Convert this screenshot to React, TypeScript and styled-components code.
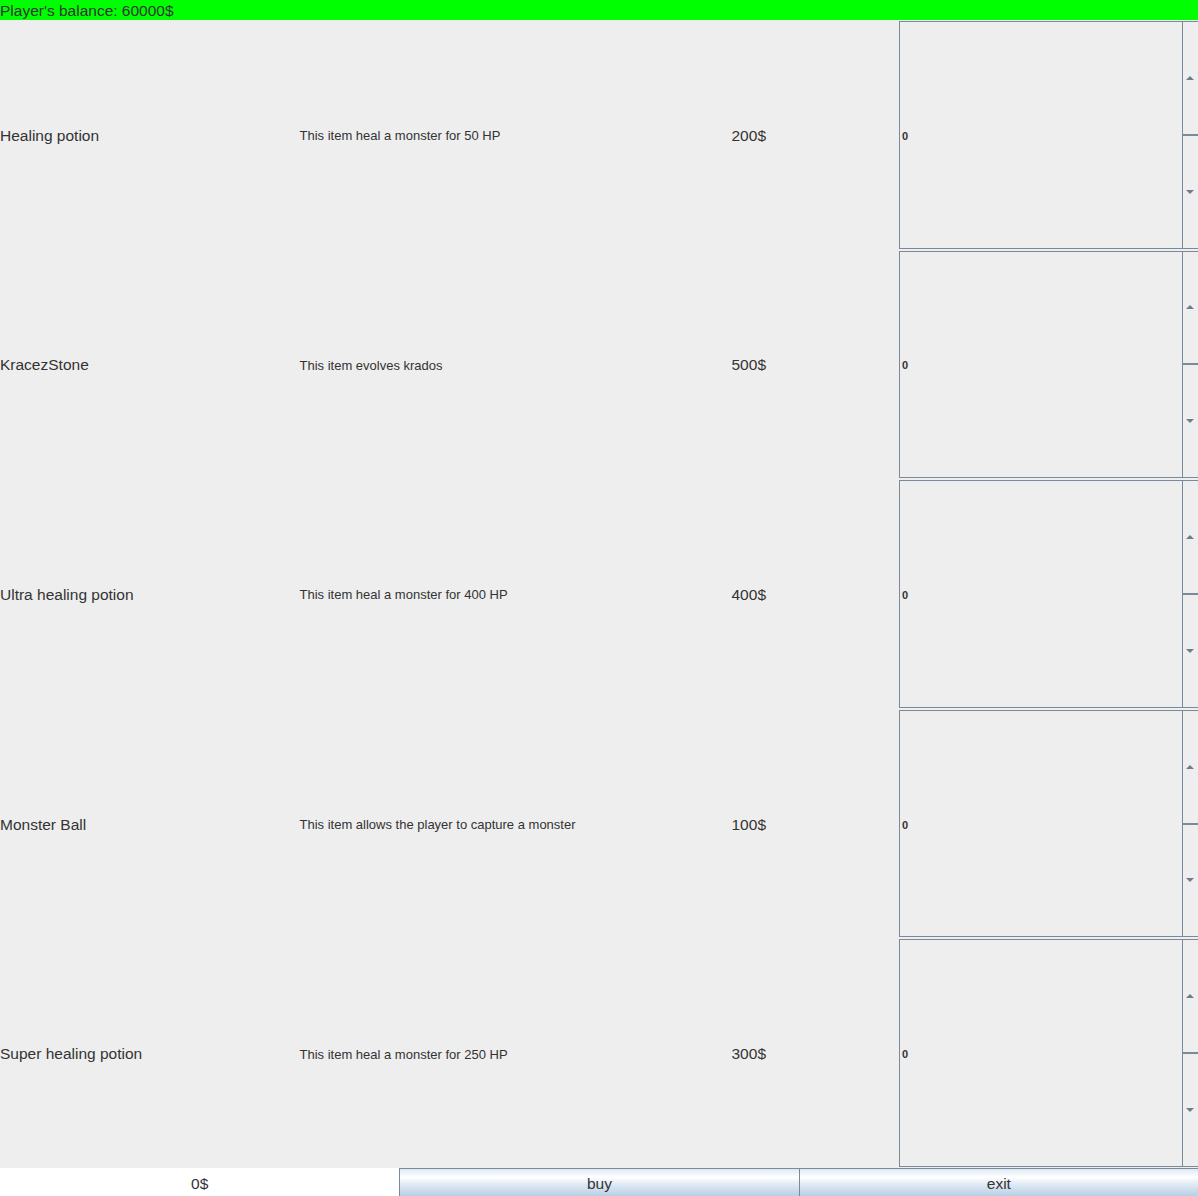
import styled, { createGlobalStyle } from "styled-components";

const GlobalStyle = createGlobalStyle`
	html, body, #root {
		margin: 0;
		padding: 0;
		height: 100%;
	}
	body {
		background: #eeeeee;
		font-family: "Liberation Sans", Arial, sans-serif;
		color: #333333;
		overflow: hidden;
	}
`;

type ShopItem = {
	name: string;
	description: string;
	price: number;
};

const items: ShopItem[] = [
	{ name: "Healing potion", description: "This item heal a monster for 50 HP", price: 200 },
	{ name: "KracezStone", description: "This item evolves krados", price: 500 },
	{ name: "Ultra healing potion", description: "This item heal a monster for 400 HP", price: 400 },
	{ name: "Monster Ball", description: "This item allows the player to capture a monster", price: 100 },
	{ name: "Super healing potion", description: "This item heal a monster for 250 HP", price: 300 },
];

const Frame = styled.div`
	display: flex;
	flex-direction: column;
	width: 1198px;
	height: 1196px;
	overflow: hidden;
`;

const BalanceBar = styled.div`
	height: 20px;
	line-height: 21px;
	background: #00ff00;
	font-size: 15.5px;
	white-space: nowrap;
`;

const ItemList = styled.div`
	flex: 1;
	display: grid;
	grid-template-rows: repeat(5, 1fr);
	min-height: 0;
`;

const ItemRow = styled.div`
	display: grid;
	grid-template-columns: repeat(4, 1fr);
	align-items: center;
	min-height: 0;
`;

const NameCell = styled.div`
	font-size: 15.5px;
	padding-top: 2px;
	white-space: nowrap;
`;

const DescriptionCell = styled.div`
	font-size: 13px;
	padding-top: 2px;
	white-space: nowrap;
`;

const PriceCell = styled.div`
	font-size: 15.5px;
	padding-top: 2px;
	text-align: center;
`;

const Spinner = styled.div`
	align-self: stretch;
	display: flex;
	margin: 1px 0 1px 0.5px;
	border: 1px solid #7a8a99;
	border-right: none;
	overflow: hidden;
`;

const SpinnerField = styled.div`
	flex: 1;
	display: flex;
	align-items: center;
	padding: 2px 0 0 2px;
	font-size: 11px;
	font-weight: bold;
	color: #333333;
`;

const ArrowColumn = styled.div`
	width: 15px;
	display: flex;
	flex-direction: column;
	border-left: 1px solid #7a8a99;
`;

const ArrowButton = styled.div<{ $down?: boolean }>`
	flex: 1;
	display: flex;
	align-items: center;
	justify-content: center;
	padding-right: 1px;
	border-top: ${(p) => (p.$down ? "2px solid #7a8a99" : "none")};
`;

const Triangle = styled.span<{ $down?: boolean }>`
	width: 0;
	height: 0;
	border-left: 4px solid transparent;
	border-right: 4px solid transparent;
	${(p) =>
		p.$down
			? "border-top: 4px solid #6f7d8a;"
			: "border-bottom: 4px solid #6f7d8a;"}
`;

const Footer = styled.div`
	height: 28px;
	display: grid;
	grid-template-columns: repeat(3, 1fr);
`;

const TotalLabel = styled.div`
	background: #ffffff;
	display: flex;
	align-items: center;
	justify-content: center;
	padding-top: 3px;
	font-size: 15.5px;
`;

const FooterButton = styled.button`
	margin: 0;
	padding: 3px 0 0;
	border: 1px solid #7a8a99;
	border-right: none;
	border-bottom: none;
	border-radius: 0;
	font-family: inherit;
	font-size: 15.5px;
	color: #333333;
	background: linear-gradient(
		to bottom,
		#dde8f3 0%,
		#ffffff 30%,
		#dde8f3 60%,
		#b8cfe5 100%
	);
`;

function QuantitySpinner({ value }: { value: number }) {
	return (
		<Spinner>
			<SpinnerField>{value}</SpinnerField>
			<ArrowColumn>
				<ArrowButton>
					<Triangle />
				</ArrowButton>
				<ArrowButton $down>
					<Triangle $down />
				</ArrowButton>
			</ArrowColumn>
		</Spinner>
	);
}

export default function App() {
	return (
		<>
			<GlobalStyle />
			<Frame>
				<BalanceBar>Player's balance: 60000$</BalanceBar>
				<ItemList>
					{items.map((item) => (
						<ItemRow key={item.name}>
							<NameCell>{item.name}</NameCell>
							<DescriptionCell>{item.description}</DescriptionCell>
							<PriceCell>{item.price}$</PriceCell>
							<QuantitySpinner value={0} />
						</ItemRow>
					))}
				</ItemList>
				<Footer>
					<TotalLabel>0$</TotalLabel>
					<FooterButton>buy</FooterButton>
					<FooterButton>exit</FooterButton>
				</Footer>
			</Frame>
		</>
	);
}
